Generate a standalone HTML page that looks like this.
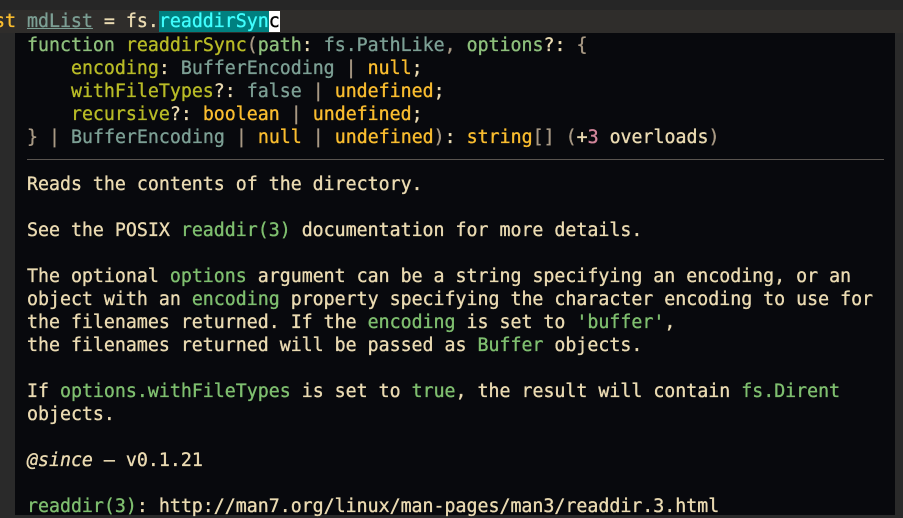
<!DOCTYPE html>
<html><head><meta charset="utf-8"><style>
html,body{margin:0;padding:0;width:903px;height:518px;overflow:hidden;background:#2a2a2a;}
body{position:relative;font-family:"DejaVu Sans Mono","Liberation Mono",monospace;font-size:18.25px;-webkit-text-stroke:0.35px currentColor;}
.top{position:absolute;left:0;top:0;width:903px;height:10px;background:#262626;}
.cur{position:absolute;left:0;top:10px;width:903px;height:23px;background:#2f2d2b;line-height:23px;white-space:pre;color:#ebdbb2;}
.pop{position:absolute;left:15px;top:33px;width:880px;height:482px;background:#08090d;}
.l{position:absolute;left:12px;white-space:pre;line-height:23px;color:#ebdbb2;margin-top:1px;}
.sep{position:absolute;left:12px;top:126px;width:857px;height:1px;background:#5a5550;}
.k{color:#8ec07c}.f{color:#b8bb26}.t{color:#7c9f94}.y{color:#fabd2f}.p{color:#a89984}.g{color:#7fbf6f}.m{color:#d3869b}
</style></head><body>
<div class="top"></div>
<div class="cur"><span style="position:absolute;left:-6px"><span class="y">st</span> <span style="color:#7c9f94;text-decoration:underline">mdList</span> = fs.<span style="background:#008080;color:#40ffff">readdirSyn</span><span style="background:#fff;color:#000">c</span></span></div>
<div class="pop">
<div class="l" style="top:0px"><span class="k">function</span> <span class="f">readdirSync</span><span class="p">(</span><span class="k">path</span>: <span class="t">fs.PathLike</span><span class="p">,</span> <span class="k">options</span>?: <span class="p">{</span></div>
<div class="l" style="top:23px">    <span class="f">encoding</span>: <span class="t">BufferEncoding</span> <span class="p">|</span> <span class="y">null</span>;</div>
<div class="l" style="top:46px">    <span class="f">withFileTypes</span>?: <span class="t">false</span> <span class="p">|</span> <span class="y">undefined</span>;</div>
<div class="l" style="top:69px">    <span class="f">recursive</span>?: <span class="y">boolean</span> <span class="p">|</span> <span class="y">undefined</span>;</div>
<div class="l" style="top:92px"><span class="p">}</span> <span class="p">|</span> <span class="t">BufferEncoding</span> <span class="p">|</span> <span class="y">null</span> <span class="p">|</span> <span class="y">undefined</span><span class="p">)</span>: <span class="y">string</span><span class="p">[]</span> <span class="p">(</span>+<span class="m">3</span> overloads<span class="p">)</span></div>
<div class="sep"></div>
<div class="l" style="top:139px">Reads the contents of the directory.</div>
<div class="l" style="top:185px">See the POSIX <span class="g">readdir(3)</span> documentation for more details.</div>
<div class="l" style="top:231px">The optional <span class="g">options</span> argument can be a string specifying an encoding, or an</div>
<div class="l" style="top:254px">object with an <span class="g">encoding</span> property specifying the character encoding to use for</div>
<div class="l" style="top:277px">the filenames returned. If the <span class="g">encoding</span> is set to <span class="g">'buffer'</span>,</div>
<div class="l" style="top:300px">the filenames returned will be passed as <span class="g">Buffer</span> objects.</div>
<div class="l" style="top:346px">If <span class="g">options.withFileTypes</span> is set to <span class="g">true</span>, the result will contain <span class="g">fs.Dirent</span></div>
<div class="l" style="top:369px">objects.</div>
<div class="l" style="top:415px"><i>@since</i> — v0.1.21</div>
<div class="l" style="top:461px"><span class="g">readdir(3)</span>: http://man7.org/linux/man-pages/man3/readdir.3.html</div>
</div>
</body></html>
